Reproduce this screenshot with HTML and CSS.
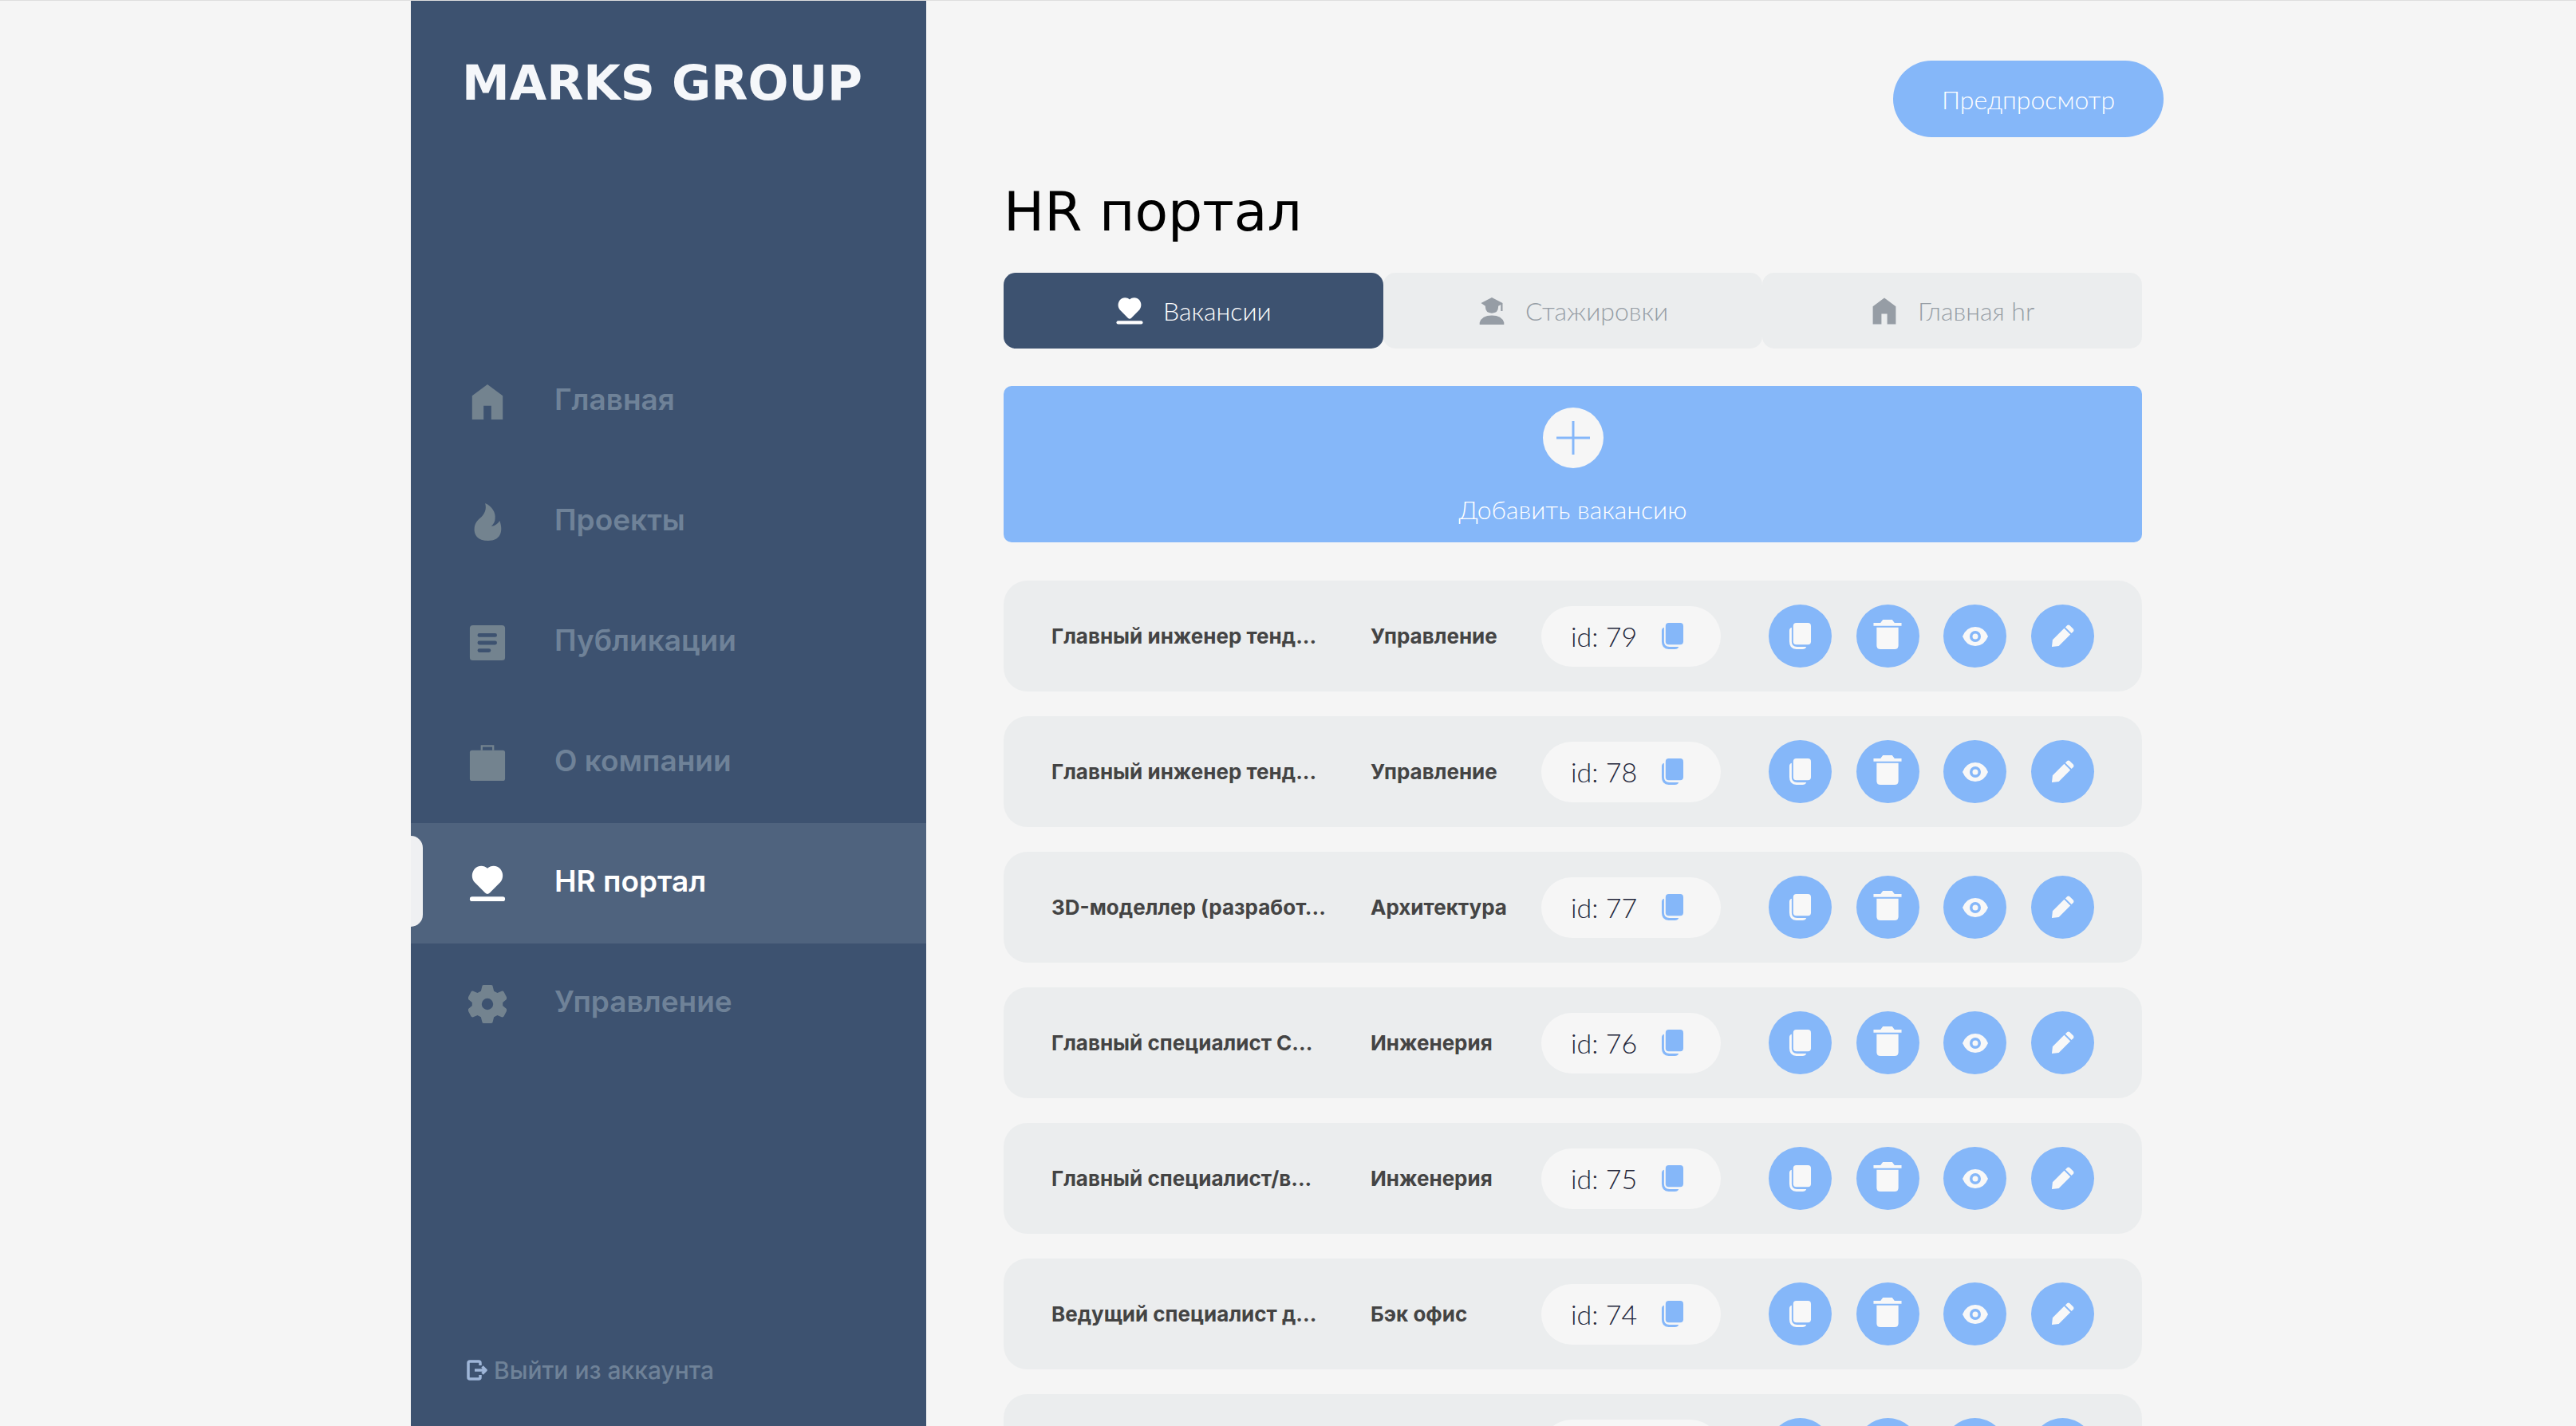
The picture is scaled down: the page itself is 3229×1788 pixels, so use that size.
FILE: index.html
```html
<!DOCTYPE html>
<html lang="ru">
<head>
<meta charset="utf-8">
<meta name="viewport" content="width=device-width, initial-scale=1">
<title>HR портал</title>
<link rel="stylesheet" href="styles.css">
</head>
<body>
<svg class="sprite" aria-hidden="true">
  <symbol id="home" viewBox="0 0 50 50"><path d="M25 2 45 17V48H30V30H20V48H5V17Z"/></symbol>
  <symbol id="fire" viewBox="0 0 50 50"><path d="M22 0C31 4 36 12 35 20c0 4-2 7-5 10 5 0 8-3 11-7 5 14 1 26-15 26C12 49 7 41 8 32c1-8 6-11 10-15 4-5 6-10 4-17Z"/></symbol>
  <symbol id="article" viewBox="0 0 50 50"><path fill-rule="evenodd" d="M6 2H44Q48 2 48 6V44Q48 48 44 48H6Q2 48 2 44V6Q2 2 6 2ZM14.500 12.500a2.500 2.500 0 0 0 0 5H35a2.500 2.500 0 0 0 0-5ZM14.500 22.500a2.500 2.500 0 0 0 0 5H35a2.500 2.500 0 0 0 0-5ZM14.500 32.500a2.500 2.500 0 0 0 0 5H27a2.500 2.500 0 0 0 0-5Z"/></symbol>
  <symbol id="case" viewBox="0 0 50 50"><path d="M17.500 8V2.500H32.500V8" fill="none" stroke="currentColor" stroke-width="2.400"/><rect x="2" y="8" width="46" height="40" rx="3"/></symbol>
  <symbol id="heart" viewBox="0 0 50 50"><path d="M25 5C30 0 38 1 42 6c4 5 4 12 0 17L28 37q-3 3-6 0L8 23C4 18 4 11 8 6 12 1 20 0 25 5Z"/><rect x="2" y="42" width="46" height="6" rx="3"/></symbol>
  <symbol id="gear" viewBox="0 0 50 50"><path fill-rule="evenodd" d="M20 0H30Q32 0 32 2L33.500 8 38 10.500 43.500 8Q45.500 7.500 46.500 9L50 16Q51 18 49 19.500L45 23V27L49 30.500Q51 32 50 34L46.500 41Q45.500 42.500 43.500 42L38 39.500 33.500 42 32 48Q32 50 30 50H20Q18 50 18 48L16.500 42 12 39.500 6.500 42Q4.500 42.500 3.500 41L0 34Q-1 32 1 30.500L5 27V23L1 19.500Q-1 18 0 16L3.500 9Q4.500 7.500 6.500 8L12 10.500 16.500 8 18 2Q18 0 20 0ZM25 17.500a7.500 7.500 0 1 0 0 15 7.500 7.500 0 0 0 0-15Z"/></symbol>
  <symbol id="exit" viewBox="0 0 26 26"><path d="M17 7V4Q17 2 15 2H4Q2 2 2 4V22Q2 24 4 24H15Q17 24 17 22V19M10 13H24M19.500 8.500 24 13 19.500 17.500" fill="none" stroke="currentColor" stroke-width="3.500" stroke-linejoin="round"/></symbol>
  <symbol id="student" viewBox="0 0 36 40"><path d="M18 1 33 9V20H30.500V11L27 13V14q0 9-9 9t-9-9V13L3 9ZM1 39V36Q4 26 18 26T35 36V39Z"/></symbol>
  <symbol id="copy" viewBox="0 0 30 36"><rect x="6" y="1" width="23" height="28" rx="4"/><path d="M4 7Q1 8 1 11V25Q1 35 10 35H18Q22 35 23 32H11Q4 32 4 25Z"/></symbol>
  <symbol id="trash" viewBox="0 0 36 40"><path d="M0 5H9L12 1H24L27 5H36V9H0ZM4 11H32V34Q32 39 27 39H9Q4 39 4 34Z"/></symbol>
  <symbol id="eye" viewBox="0 0 32 24"><path fill-rule="evenodd" d="M0 12Q5 0 16 0T32 12Q27 24 16 24T0 12ZM16 5a7 7 0 1 0 0 14 7 7 0 0 0 0-14Z"/><circle cx="16" cy="12" r="3.500"/></symbol>
  <symbol id="pencil" viewBox="0 0 30 30"><path d="M1 29 2 20 17 5 25 13 10 28ZM18.500 3.500 21 1Q22.500 0 24 1L29 6Q30 7.500 29 9L26.500 11.500Z"/></symbol>
</svg>
<div class="layout">
  <aside class="sidebar">
    <a class="logo" href="#">MARKS GROUP</a>
    <nav class="nav">
      <a class="nav-item" href="#"><svg class="nav-icon"><use href="#home"/></svg><span>Главная</span></a>
      <a class="nav-item" href="#"><svg class="nav-icon"><use href="#fire"/></svg><span>Проекты</span></a>
      <a class="nav-item" href="#"><svg class="nav-icon"><use href="#article"/></svg><span>Публикации</span></a>
      <a class="nav-item" href="#"><svg class="nav-icon"><use href="#case"/></svg><span>О компании</span></a>
      <a class="nav-item active" href="#" aria-current="page"><svg class="nav-icon"><use href="#heart"/></svg><span>HR портал</span></a>
      <a class="nav-item" href="#"><svg class="nav-icon"><use href="#gear"/></svg><span>Управление</span></a>
    </nav>
    <a class="logout" href="#"><svg class="logout-icon"><use href="#exit"/></svg><span>Выйти из аккаунта</span></a>
  </aside>
  <main class="main">
    <header class="topbar"><button class="preview" type="button">Предпросмотр</button></header>
    <div class="content">
      <h1 class="title">HR портал</h1>
      <div class="tabs">
        <button class="tab selected" type="button"><svg class="tab-icon"><use href="#heart"/></svg>Вакансии</button>
        <button class="tab" type="button"><svg class="tab-icon"><use href="#student"/></svg>Стажировки</button>
        <button class="tab" type="button"><svg class="tab-icon"><use href="#home"/></svg>Главная hr</button>
      </div>
      <button class="add" type="button">
        <svg class="plus" viewBox="0 0 76 76"><circle cx="38" cy="38" r="38" fill="#f6f6f6"/><path d="M38 17V59M17 38H59" stroke="#85b7f9" stroke-width="3"/></svg>
        <span>Добавить вакансию</span>
      </button>
      <ul class="list">
        <li class="row"><span class="name">Главный инженер тенд...</span><span class="dept">Управление</span><span class="id">id: 79<button class="id-copy" type="button" aria-label="Скопировать id"><svg class="i-copy"><use href="#copy"/></svg></button></span>
          <span class="actions"><button class="act" type="button" aria-label="Дублировать"><svg class="i-copy"><use href="#copy"/></svg></button><button class="act" type="button" aria-label="Удалить"><svg class="i-trash"><use href="#trash"/></svg></button><button class="act" type="button" aria-label="Показать"><svg class="i-eye"><use href="#eye"/></svg></button><button class="act" type="button" aria-label="Изменить"><svg class="i-pencil"><use href="#pencil"/></svg></button></span></li>
        <li class="row"><span class="name">Главный инженер тенд...</span><span class="dept">Управление</span><span class="id">id: 78<button class="id-copy" type="button" aria-label="Скопировать id"><svg class="i-copy"><use href="#copy"/></svg></button></span>
          <span class="actions"><button class="act" type="button" aria-label="Дублировать"><svg class="i-copy"><use href="#copy"/></svg></button><button class="act" type="button" aria-label="Удалить"><svg class="i-trash"><use href="#trash"/></svg></button><button class="act" type="button" aria-label="Показать"><svg class="i-eye"><use href="#eye"/></svg></button><button class="act" type="button" aria-label="Изменить"><svg class="i-pencil"><use href="#pencil"/></svg></button></span></li>
        <li class="row"><span class="name">3D-моделлер (разработ...</span><span class="dept">Архитектура</span><span class="id">id: 77<button class="id-copy" type="button" aria-label="Скопировать id"><svg class="i-copy"><use href="#copy"/></svg></button></span>
          <span class="actions"><button class="act" type="button" aria-label="Дублировать"><svg class="i-copy"><use href="#copy"/></svg></button><button class="act" type="button" aria-label="Удалить"><svg class="i-trash"><use href="#trash"/></svg></button><button class="act" type="button" aria-label="Показать"><svg class="i-eye"><use href="#eye"/></svg></button><button class="act" type="button" aria-label="Изменить"><svg class="i-pencil"><use href="#pencil"/></svg></button></span></li>
        <li class="row"><span class="name">Главный специалист С...</span><span class="dept">Инженерия</span><span class="id">id: 76<button class="id-copy" type="button" aria-label="Скопировать id"><svg class="i-copy"><use href="#copy"/></svg></button></span>
          <span class="actions"><button class="act" type="button" aria-label="Дублировать"><svg class="i-copy"><use href="#copy"/></svg></button><button class="act" type="button" aria-label="Удалить"><svg class="i-trash"><use href="#trash"/></svg></button><button class="act" type="button" aria-label="Показать"><svg class="i-eye"><use href="#eye"/></svg></button><button class="act" type="button" aria-label="Изменить"><svg class="i-pencil"><use href="#pencil"/></svg></button></span></li>
        <li class="row"><span class="name">Главный специалист/в...</span><span class="dept">Инженерия</span><span class="id">id: 75<button class="id-copy" type="button" aria-label="Скопировать id"><svg class="i-copy"><use href="#copy"/></svg></button></span>
          <span class="actions"><button class="act" type="button" aria-label="Дублировать"><svg class="i-copy"><use href="#copy"/></svg></button><button class="act" type="button" aria-label="Удалить"><svg class="i-trash"><use href="#trash"/></svg></button><button class="act" type="button" aria-label="Показать"><svg class="i-eye"><use href="#eye"/></svg></button><button class="act" type="button" aria-label="Изменить"><svg class="i-pencil"><use href="#pencil"/></svg></button></span></li>
        <li class="row"><span class="name">Ведущий специалист д...</span><span class="dept">Бэк офис</span><span class="id">id: 74<button class="id-copy" type="button" aria-label="Скопировать id"><svg class="i-copy"><use href="#copy"/></svg></button></span>
          <span class="actions"><button class="act" type="button" aria-label="Дублировать"><svg class="i-copy"><use href="#copy"/></svg></button><button class="act" type="button" aria-label="Удалить"><svg class="i-trash"><use href="#trash"/></svg></button><button class="act" type="button" aria-label="Показать"><svg class="i-eye"><use href="#eye"/></svg></button><button class="act" type="button" aria-label="Изменить"><svg class="i-pencil"><use href="#pencil"/></svg></button></span></li>
        <li class="row"><span class="name"></span><span class="dept"></span><span class="id"></span>
          <span class="actions"><button class="act" type="button" aria-label="Дублировать"></button><button class="act" type="button" aria-label="Удалить"></button><button class="act" type="button" aria-label="Показать"></button><button class="act" type="button" aria-label="Изменить"></button></span></li>
      </ul>
    </div>
  </main>
</div>
</body>
</html>
```
FILE: styles.css
```css
:root {
  --navy: #3d5270;
  --navy-light: #4f637e;
  --blue: #85b7f9;
  --page: #f5f5f5;
  --card: #ebedee;
}
* { box-sizing: border-box; }
body {
  margin: 0;
  background: var(--page);
  font-family: Lato, "Open Sans", sans-serif;
  font-size: 32px;
  font-weight: 300;
  border-top: 1px solid #dedede;
}
button {
  border: 0;
  padding: 0;
  font: inherit;
  color: inherit;
  cursor: pointer;
}
a { color: inherit; text-decoration: none; }
svg { fill: currentColor; display: block; flex: none; overflow: visible; }
.sprite { position: absolute; width: 0; height: 0; }

.layout {
  display: flex;
  max-width: 2199px;
  height: calc(100vh - 1px);
  margin: 0 auto;
}

.sidebar {
  display: flex;
  flex-direction: column;
  flex: 0 0 646px;
  padding: 67px 0 42px;
  background: var(--navy);
  color: #6f8298;
  font-family: Inter, sans-serif;
}
.logo {
  padding-left: 64px;
  color: #f5f7fa;
  font: bold 60px/72px "DejaVu Sans", sans-serif;
  white-space: nowrap;
}
.nav { margin-top: 288px; }
.nav-item {
  position: relative;
  display: flex;
  align-items: center;
  gap: 60px;
  height: 151px;
  padding: 0 0 6px 72px;
  font-size: 37px;
  font-weight: 600;
}
.nav-icon { width: 48px; height: 48px; margin-top: 6px; color: #73838f; }
.active { background: var(--navy-light); color: #fff; }
.active .nav-icon { color: #fff; }
.active::before {
  content: "";
  position: absolute;
  left: 0;
  top: 16px;
  width: 15px;
  height: 114px;
  border-radius: 0 16px 16px 0;
  background: #eff0f2;
}
.logout {
  display: flex;
  align-items: center;
  gap: 8px;
  margin-top: auto;
  padding-left: 70px;
  font-size: 30px;
  font-weight: 500;
  line-height: 56px;
}
.logout-icon { width: 26px; height: 26px; color: #9fb6d8; }

.main {
  flex: 1;
  min-width: 0;
  padding: 75px 2px 32px 97px;
  overflow-y: auto;
  scrollbar-width: none;
}
.topbar { display: flex; justify-content: flex-end; }
.preview {
  width: 339px;
  height: 96px;
  border-radius: 48px;
  background: var(--blue);
  color: #fff;
}
.content { max-width: 1427px; }
.title {
  margin: 54px 0 36px;
  color: #000;
  font: 68px/80px "DejaVu Sans", sans-serif;
}
.tabs { display: flex; }
.tab {
  display: flex;
  flex: 1;
  align-items: center;
  justify-content: center;
  gap: 24px;
  height: 95px;
  border-radius: 15px;
  background: var(--card);
  color: #969da5;
}
.tab-icon { width: 36px; height: 36px; }
.selected { background: var(--navy); color: #fff; }
.add {
  display: flex;
  flex-direction: column;
  align-items: center;
  gap: 32px;
  width: 100%;
  height: 196px;
  margin: 47px 0 48px;
  padding-top: 27px;
  border-radius: 10px;
  background: var(--blue);
  color: #fff;
}
.plus { width: 76px; height: 76px; }

.list {
  display: flex;
  flex-direction: column;
  gap: 31px;
  margin: 0;
  padding: 0;
  list-style: none;
}
.row {
  display: grid;
  grid-template-columns: minmax(0, 400fr) minmax(0, 214fr) 285px 408px;
  align-items: center;
  height: 139px;
  padding: 0 60px;
  border-radius: 30px;
  background: var(--card);
  color: #444;
}
.name, .dept {
  font: bold 26px/32px Inter, sans-serif;
  white-space: nowrap;
}
.id {
  display: flex;
  align-items: center;
  justify-content: space-between;
  width: 225px;
  height: 76px;
  padding: 0 46px 0 37px;
  border-radius: 38px;
  background: #f6f6f6;
  color: #23263a;
  font-size: 34px;
}
.id-copy { background: none; color: var(--blue); }
.actions { display: flex; justify-content: space-between; }
.act {
  display: flex;
  align-items: center;
  justify-content: center;
  width: 79px;
  height: 79px;
  border-radius: 50%;
  background: var(--blue);
  color: #f8f8f8;
}
.i-copy { width: 29px; height: 35px; }
.i-trash { width: 36px; height: 39px; margin-bottom: 4px; }
.i-eye { width: 32px; height: 24px; }
.i-pencil { width: 29px; height: 29px; }
```
